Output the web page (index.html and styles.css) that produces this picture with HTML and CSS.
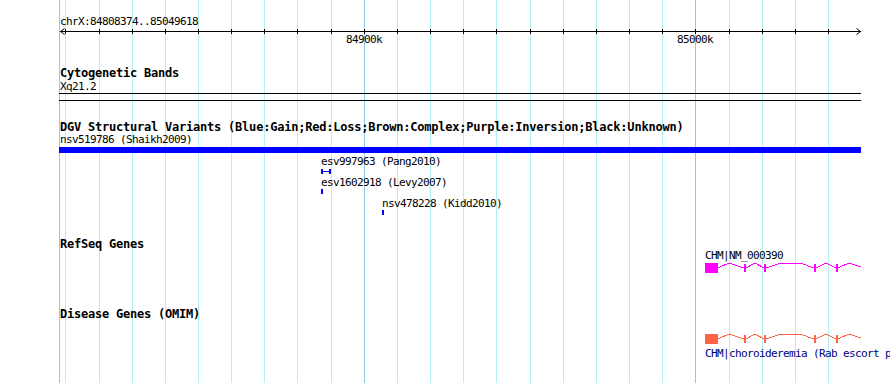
FILE: index.html
```html
<!DOCTYPE html>
<html lang="en">
<head>
  <meta charset="UTF-8" />
  <title>chrX:84808374..85049618</title>
  <link rel="stylesheet" href="styles.css">
</head>
<body>
  <div class="panel">
    <svg class="grid" width="890" height="383" shape-rendering="crispEdges">
      <rect class="grid-major" x="59" y="0" width="1" height="383"/>
      <g class="grid-minor">
        <rect x="65" y="0" width="1" height="383"/>
        <rect x="99" y="0" width="1" height="383"/>
        <rect x="132" y="0" width="1" height="383"/>
        <rect x="165" y="0" width="1" height="383"/>
        <rect x="198" y="0" width="1" height="383"/>
        <rect x="231" y="0" width="1" height="383"/>
        <rect x="264" y="0" width="1" height="383"/>
        <rect x="297" y="0" width="1" height="383"/>
        <rect x="331" y="0" width="1" height="383"/>
        <rect x="397" y="0" width="1" height="383"/>
        <rect x="430" y="0" width="1" height="383"/>
        <rect x="463" y="0" width="1" height="383"/>
        <rect x="496" y="0" width="1" height="383"/>
        <rect x="530" y="0" width="1" height="383"/>
        <rect x="563" y="0" width="1" height="383"/>
        <rect x="596" y="0" width="1" height="383"/>
        <rect x="629" y="0" width="1" height="383"/>
        <rect x="662" y="0" width="1" height="383"/>
        <rect x="729" y="0" width="1" height="383"/>
        <rect x="762" y="0" width="1" height="383"/>
        <rect x="795" y="0" width="1" height="383"/>
        <rect x="828" y="0" width="1" height="383"/>
      </g>
      <rect class="grid-major" x="364" y="0" width="1" height="383"/>
      <rect class="grid-major" x="695" y="0" width="1" height="383"/>
    </svg>

    <!-- ruler -->
    <div class="ruler">
      <div class="small-text">chrX:84808374..85049618</div>
      <svg class="scale" width="890" height="18">
        <g shape-rendering="crispEdges">
          <rect x="60" y="3" width="801" height="1"/>
          <rect x="65" y="1" width="1" height="5"/>
          <rect x="99" y="1" width="1" height="5"/>
          <rect x="132" y="1" width="1" height="5"/>
          <rect x="165" y="1" width="1" height="5"/>
          <rect x="198" y="1" width="1" height="5"/>
          <rect x="231" y="1" width="1" height="5"/>
          <rect x="264" y="1" width="1" height="5"/>
          <rect x="297" y="1" width="1" height="5"/>
          <rect x="331" y="1" width="1" height="5"/>
          <rect x="364" y="1" width="1" height="5"/>
          <rect x="397" y="1" width="1" height="5"/>
          <rect x="430" y="1" width="1" height="5"/>
          <rect x="463" y="1" width="1" height="5"/>
          <rect x="496" y="1" width="1" height="5"/>
          <rect x="530" y="1" width="1" height="5"/>
          <rect x="563" y="1" width="1" height="5"/>
          <rect x="596" y="1" width="1" height="5"/>
          <rect x="629" y="1" width="1" height="5"/>
          <rect x="662" y="1" width="1" height="5"/>
          <rect x="695" y="1" width="1" height="5"/>
          <rect x="729" y="1" width="1" height="5"/>
          <rect x="762" y="1" width="1" height="5"/>
          <rect x="795" y="1" width="1" height="5"/>
          <rect x="828" y="1" width="1" height="5"/>
        </g>
        <polyline class="arrow" points="64.5,0.5 60.5,3.5 64.5,6.5"/>
        <polyline class="arrow" points="856.5,0.5 860.5,3.5 856.5,6.5"/>
        <text class="svg-small" x="364" y="15" text-anchor="middle">84900k</text>
        <text class="svg-small" x="695" y="15" text-anchor="middle">85000k</text>
      </svg>
    </div>

    <!-- Cytogenetic Bands -->
    <div class="track track-cyto">
      <div class="track-title">Cytogenetic Bands</div>
      <svg width="890" height="22">
        <text class="svg-small" x="60" y="10">Xq21.2</text>
        <g shape-rendering="crispEdges">
          <rect x="59" y="13" width="802" height="1"/>
          <rect x="59" y="20" width="802" height="1"/>
        </g>
      </svg>
    </div>

    <!-- DGV -->
    <div class="track track-dgv">
      <div class="track-title">DGV Structural Variants (Blue:Gain;Red:Loss;Brown:Complex;Purple:Inversion;Black:Unknown)</div>
      <svg width="890" height="82">
        <text class="svg-small" x="60" y="9">nsv519786 (Shaikh2009)</text>
        <g class="gain" shape-rendering="crispEdges">
          <rect x="59" y="13" width="802" height="6"/>
          <rect x="321" y="35" width="2" height="5"/>
          <rect x="329" y="35" width="2" height="5"/>
          <rect x="321" y="37" width="10" height="1"/>
          <rect x="321" y="55" width="2" height="5"/>
          <rect x="382" y="76" width="2" height="5"/>
        </g>
        <text class="svg-small" x="321" y="31">esv997963 (Pang2010)</text>
        <text class="svg-small" x="321" y="52">esv1602918 (Levy2007)</text>
        <text class="svg-small" x="382" y="73">nsv478228 (Kidd2010)</text>
      </svg>
    </div>

    <!-- RefSeq -->
    <div class="track track-refseq">
      <div class="track-title">RefSeq Genes</div>
      <svg width="890" height="24">
        <text class="svg-small" x="705" y="8">CHM|NM_000390</text>
        <g class="gene gene-refseq" shape-rendering="crispEdges">
          <rect x="705" y="12" width="13" height="10"/>
          <rect x="744" y="13" width="2" height="8"/>
          <rect x="764" y="13" width="2" height="8"/>
          <rect x="814" y="13" width="2" height="8"/>
          <rect x="836" y="13" width="2" height="8"/>
          <polyline points="718,17 729,12 744,17"/>
          <polyline points="746,17 755,12 764,17"/>
          <polyline points="766,17 778,13 800,12 814,17"/>
          <polyline points="816,17 826,12 836,17"/>
          <polyline points="838,17 849,12 861,16"/>
        </g>
      </svg>
    </div>

    <!-- OMIM -->
    <div class="track track-omim">
      <div class="track-title">Disease Genes (OMIM)</div>
      <svg width="890" height="40">
        <g class="gene gene-omim" shape-rendering="crispEdges">
          <rect x="705" y="13" width="13" height="10"/>
          <rect x="744" y="14" width="2" height="8"/>
          <rect x="764" y="14" width="2" height="8"/>
          <rect x="814" y="14" width="2" height="8"/>
          <rect x="836" y="14" width="2" height="8"/>
          <polyline points="718,18 729,13 744,18"/>
          <polyline points="746,18 755,13 764,18"/>
          <polyline points="766,18 778,14 800,13 814,18"/>
          <polyline points="816,18 826,13 836,18"/>
          <polyline points="838,18 849,13 861,17"/>
        </g>
        <text class="svg-small omim-label" x="705" y="36">CHM|choroideremia (Rab escort p</text>
      </svg>
    </div>
  </div>
</body>
</html>
```

FILE: styles.css
```css
* { box-sizing: border-box; }

html, body {
  margin: 0;
  background: #ffffff;
  overflow: hidden;
}

body {
  font-family: 'DejaVu Sans Mono', 'Liberation Mono', monospace;
  color: #000;
}

.panel {
  position: relative;
  z-index: 0;
  width: 890px;
  height: 383px;
  overflow: hidden;
}

.panel svg {
  display: block;
  overflow: visible;
}

.grid {
  position: absolute;
  top: 0;
  left: 0;
  z-index: -1;
}

.grid-minor { fill: #b2f0f2; }
.grid-major { fill: #8ecdec; }

.small-text {
  font-size: 11px;
  letter-spacing: -0.62px;
  line-height: 13px;
  padding-left: 60px;
}

.svg-small {
  font-family: 'DejaVu Sans Mono', 'Liberation Mono', monospace;
  font-size: 11px;
  letter-spacing: -0.62px;
  fill: #000;
}

.ruler {
  padding-top: 15px;
}

.scale rect { fill: #000; }

.arrow {
  fill: none;
  stroke: #000;
  stroke-width: 1;
}

.track-title {
  font-size: 12px;
  font-weight: bold;
  letter-spacing: -0.22px;
  line-height: 13px;
  padding-left: 60px;
  white-space: nowrap;
}

.track-cyto { margin-top: 21px; }
.track-dgv { margin-top: 19px; }
.track-refseq { margin-top: 22px; }
.track-omim { margin-top: 33px; }

.gain rect { fill: #0000ff; }

.gene polyline {
  fill: none;
  stroke-width: 1;
}

.gene-refseq rect { fill: #ff00ff; }
.gene-refseq polyline { stroke: #ff00ff; }

.gene-omim rect { fill: #ff6347; }
.gene-omim polyline { stroke: #ff6347; }

.omim-label { fill: #000080; }
```
